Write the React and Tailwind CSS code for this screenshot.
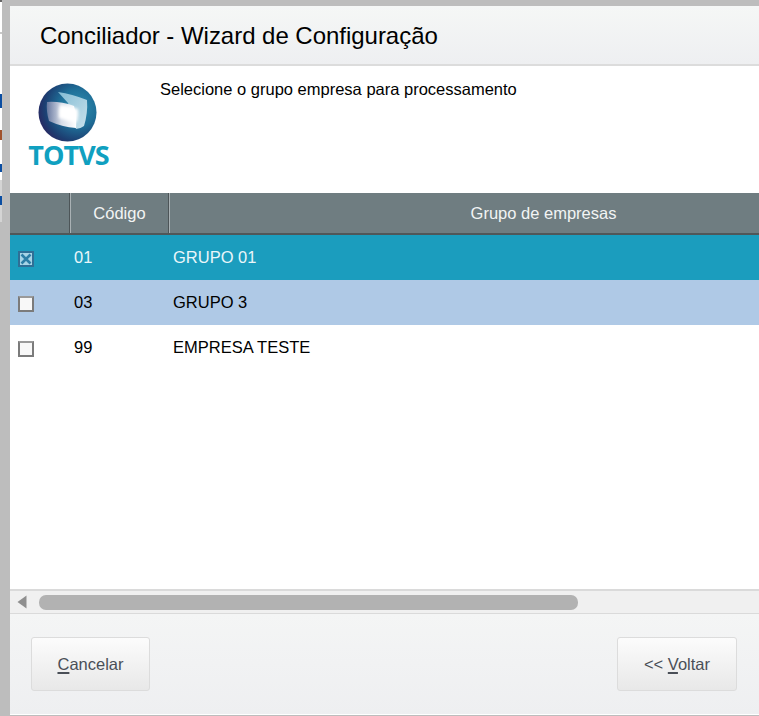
import React from "react";

function Logo() {
  return (
    <div className="flex flex-col items-center w-[80px] ml-[19px] mt-[17px]">
      <svg width="60" height="60" viewBox="0 0 60 60" className="block -ml-[2px]">
        <defs>
          <radialGradient id="ball" cx="0.68" cy="0.42" r="0.72">
            <stop offset="0" stopColor="#2f8fb0" />
            <stop offset="0.45" stopColor="#1f6f98" />
            <stop offset="0.8" stopColor="#1c3f72" />
            <stop offset="1" stopColor="#2a2660" />
          </radialGradient>
          <linearGradient id="back" x1="0" y1="0" x2="1" y2="1">
            <stop offset="0" stopColor="#84bcd4" />
            <stop offset="1" stopColor="#c9e2ec" />
          </linearGradient>
          <linearGradient id="front" x1="0" y1="0" x2="1" y2="0">
            <stop offset="0" stopColor="#66779f" />
            <stop offset="0.5" stopColor="#d7dde8" />
            <stop offset="1" stopColor="#ffffff" />
          </linearGradient>
          <filter id="soft" x="-10%" y="-10%" width="120%" height="120%">
            <feGaussianBlur stdDeviation="0.7" />
          </filter>
          <filter id="softer" x="-30%" y="-30%" width="160%" height="160%">
            <feGaussianBlur stdDeviation="1.8" />
          </filter>
        </defs>
        <circle cx="29.5" cy="29.5" r="29" fill="url(#ball)" />
        <g filter="url(#soft)">
          <path d="M20 9 Q34 11 49 17 Q50 30 46 43 Q42 46 38 46 L30 20 Z" fill="url(#back)" />
          <path d="M9 19 Q22 18 36 23 Q39 34 38 45 Q24 44 11 38 Q8 28 9 19 Z" fill="url(#front)" />
        </g>
        <path d="M22 22 Q32 23 40 26 Q41 32 39 39 Q29 38 21 35 Q20 28 22 22 Z" fill="#ffffff" filter="url(#softer)" />
      </svg>
      <span className="-mt-[1px] font-['Open_Sans',sans-serif] font-bold text-[27px] leading-[26px] tracking-[-0.9px] text-[#10a0c0] -ml-[1px]">TOTVS</span>
    </div>
  );
}

function Check({ on }) {
  if (on) {
    return (
      <svg width="16" height="16" viewBox="0 0 16 16" className="block">
        <rect x="0" y="0" width="16" height="16" fill="#2f6f96" />
        <rect x="2" y="2" width="12" height="12" fill="#a6d4e6" />
        <path d="M3.5 3.5L12.5 12.5M12.5 3.5L3.5 12.5" stroke="#2b7ea6" strokeWidth="2.6" />
      </svg>
    );
  }
  return <div className="w-[16px] h-[16px] border-2 border-[#7b7b7b] border-t-[#9a9a9a] bg-[#f8f8f8]" />;
}

function Row({ on, code, name, cls }) {
  return (
    <div className={`h-[45px] flex items-center text-[16.5px] ${cls}`}>
      <div className="w-[64px] pl-[8px] pt-[2px] shrink-0"><Check on={on} /></div>
      <div className="w-[99px] shrink-0">{code}</div>
      <div>{name}</div>
    </div>
  );
}

function Sep() {
  return (
    <div className="w-[2px] h-full flex shrink-0">
      <div className="w-[1px] bg-[#4d5558]" />
      <div className="w-[1px] bg-[#a9b1b4]" />
    </div>
  );
}

function Btn({ children, cls }) {
  return (
    <button className={`h-[54px] rounded-[3px] border border-[#dcdcdc] bg-gradient-to-b from-[#fcfcfc] to-[#e8e8e8] text-[16.5px] text-[#4a4f57] ${cls}`}>
      {children}
    </button>
  );
}

export default function App() {
  return (
    <div className="w-[759px] h-[716px] overflow-hidden flex bg-[#bdbdbd] font-['Liberation_Sans',Arial,sans-serif] text-black">
      <div className="w-[2px] shrink-0 flex flex-col">
        <div className="h-[2px] bg-[#666666]" />
        <div className="h-[30px] bg-white" />
        <div className="h-[2px] bg-[#c8c8c8]" />
        <div className="h-[60px] bg-white" />
        <div className="h-[14px] bg-[#0b4ea2]" />
        <div className="h-[22px] bg-white" />
        <div className="h-[10px] bg-[#a0522d]" />
        <div className="h-[24px] bg-white" />
        <div className="h-[8px] bg-[#0b4ea2]" />
        <div className="h-[8px] bg-white" />
        <div className="h-[16px] bg-[#d4d4d4]" />
        <div className="h-[9px] bg-[#0b4ea2]" />
        <div className="h-[17px] bg-[#d4d4d4]" />
      </div>
      <div className="w-[8px] shrink-0" />
      <div className="flex-1 min-w-0 flex flex-col pt-[6px] pb-[1px]">
        <div className="bg-white flex-1 flex flex-col min-h-0 border-b border-white">
          <div className="h-[60px] shrink-0 bg-gradient-to-b from-[#f5f7f6] to-[#eeeff1] border-b-2 border-[#dcdcdc] pl-[30px] pt-[2px] flex items-center">
            <span className="text-[24px] leading-none whitespace-nowrap tracking-[-0.03px]">Conciliador - Wizard de Configuração</span>
          </div>
          <div className="h-[127px] shrink-0 bg-white flex">
            <Logo />
            <div className="ml-[51px] mt-[14px] text-[16.5px] leading-[18px] whitespace-nowrap">Selecione o grupo empresa para processamento</div>
          </div>
          <div className="h-[396px] shrink-0 bg-white overflow-hidden flex flex-col">
            <div className="h-[42px] shrink-0 bg-[#6f7d81] border-b-2 border-[#505759] flex text-[16.5px] text-[#f2f4f4]">
              <div className="w-[59px] shrink-0" />
              <Sep />
              <div className="w-[97px] shrink-0 flex items-center justify-center pt-[1px]">Código</div>
              <Sep />
              <div className="w-[747px] shrink-0 flex items-center justify-center pt-[1px]">Grupo de empresas</div>
            </div>
            <Row on code="01" name="GRUPO 01" cls="bg-[#1b9dbe] text-[#eaf6fa]" />
            <Row code="03" name="GRUPO 3" cls="bg-[#afc9e6] text-black" />
            <Row code="99" name="EMPRESA TESTE" cls="bg-white text-black" />
          </div>
          <div className="h-[25px] shrink-0 bg-[#f0f0f0] border-t-2 border-b border-[#dadada] pt-[1px] flex items-center">
            <svg width="10" height="14" viewBox="0 0 10 14" className="ml-[7px] -mt-[1px] block">
              <path d="M9.5 0.5V13.5L0.5 7Z" fill="#8f8f8f" />
            </svg>
            <div className="ml-[12px] w-[539px] h-[15px] rounded-[7px] bg-[#b2b2b2]" />
          </div>
          <div className="flex-1 bg-gradient-to-b from-[#f4f5f5] to-[#eeeff1] flex items-start justify-between pl-[21px] pr-[22px] pt-[23px]">
            <Btn cls="w-[119px]"><span className="underline decoration-2 underline-offset-2">C</span>ancelar</Btn>
            <Btn cls="w-[120px]">&lt;&lt; <span className="underline decoration-2 underline-offset-2">V</span>oltar</Btn>
          </div>
        </div>
      </div>
    </div>
  );
}
